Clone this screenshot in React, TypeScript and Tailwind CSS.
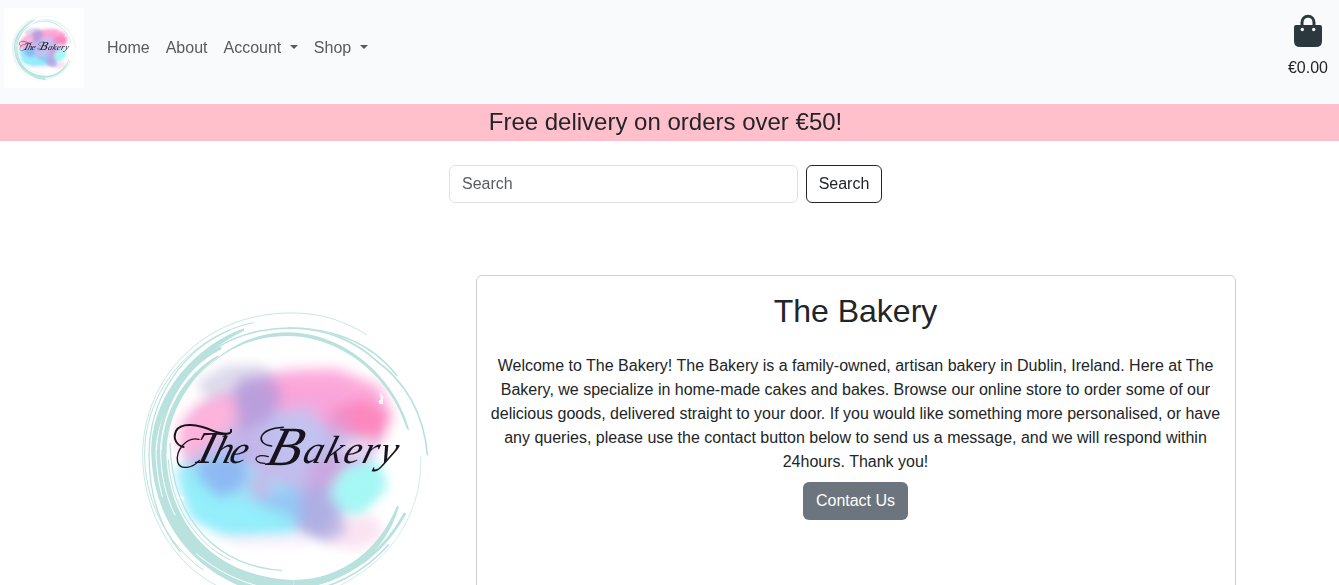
import React, { useId } from "react";

function BakeryLogo({ className }: { className: string }) {
  const id = useId().replace(/[^a-zA-Z0-9]/g, "");
  const soft = `soft${id}`;
  const wide = `wide${id}`;
  const url = (n: string) => `url(#${n})`;
  return (
    <svg viewBox="0 0 360 360" className={className} role="img">
      <defs>
        <filter id={soft} x="-20%" y="-20%" width="140%" height="140%">
          <feGaussianBlur stdDeviation="19" />
        </filter>
        <filter id={wide} x="-30%" y="-30%" width="160%" height="160%">
          <feGaussianBlur stdDeviation="17" />
        </filter>
      </defs>
      <rect width="360" height="360" fill="#fff" />
      <g transform="translate(24 25) scale(0.33333)">
        {/* watercolour wash */}
        <g filter={url(wide)}>
          <path d="M200 245 L290 195 L390 195 L480 260 L400 380 L250 330Z" fill="#dedbec" />
          <path d="M190 350 L330 260 L620 260 L740 330 L740 440 L660 600 L480 690 L260 600 L160 520Z" fill="#c2beed" />
          <path d="M140 500 L300 470 L520 600 L520 685 L300 695 L200 650Z" fill="#9ae4f8" />
          <path d="M600 530 L740 490 L760 560 L690 640 L580 640Z" fill="#aef3f4" />
          <path d="M560 650 L740 650 L760 710 L680 750 L590 735Z" fill="#fbe3f2" />
          <path d="M500 590 L620 560 L650 700 L590 725 L500 690Z" fill="#c5bde8" />
          <path d="M250 700 L520 700 L540 735 L320 735Z" fill="#f7effb" />
        </g>
        <g filter={url(soft)}>
          <path d="M400 230 L480 210 L620 207 L750 260 L785 345 L750 430 L660 400 L560 360 L460 340 L400 290Z" fill="#fca3d8" opacity=".95" />
          <path d="M600 330 L700 295 L785 345 L750 420 L640 395Z" fill="#fb83b8" opacity=".85" />
          <path d="M150 370 L205 310 L300 275 L350 330 L290 395 L180 480 L145 440Z" fill="#fdb2db" />
          <path d="M330 235 L420 225 L460 290 L415 360 L330 400 L310 300Z" fill="#b897da" opacity=".8" />
          <path d="M460 330 L540 310 L590 400 L540 480 L440 440Z" fill="#c2c4f2" opacity=".7" />
          <path d="M580 350 L650 325 L660 380 L600 420Z" fill="#df98d2" opacity=".6" />
          <path d="M640 425 L740 415 L720 465 L640 485Z" fill="#f6dcf0" opacity=".9" />
          <path d="M300 400 L390 400 L410 470 L300 490Z" fill="#c4b0e7" opacity=".7" />
          <path d="M210 480 L340 460 L350 550 L270 595 L200 570Z" fill="#8db3f2" opacity=".9" />
          <path d="M380 590 L500 560 L550 640 L480 680 L370 650Z" fill="#94c4f3" opacity=".9" />
          <path d="M350 540 L420 490 L430 590 L370 600Z" fill="#cfaee4" opacity=".7" />
          <path d="M540 480 L660 460 L610 560 L530 570Z" fill="#cda0dc" opacity=".8" />
          <path d="M140 510 L210 540 L270 595 L390 615 L480 650 L490 695 L270 700 L180 650Z" fill="#92effb" opacity=".95" />
          <path d="M640 515 L740 490 L770 560 L690 635 L595 600Z" fill="#a4f8f5" opacity=".95" />
          <path d="M510 570 L590 550 L620 640 L580 710 L510 680Z" fill="#aaa9e2" opacity=".75" />
        </g>
        <path d="M745 304 L753 298 L749 274 L760 292 L758 313 L748 311Z" fill="#fff" opacity=".9" />
        <path d="M143 580 L151 589 L164 592 L157 603 L145 597Z" fill="#fff" />

        {/* brushed ring */}
        <g fill="#b9e2df">
          <path d="M342 85 C190 140 62 290 64 460 L77 460 C80 310 205 155 342 93Z" />
          <path d="M264 166 C160 225 96 340 95 460 L109 460 C112 330 190 225 264 172Z" />
          <path d="M64 450 C64 640 175 860 490 900 L490 840 C230 830 108 645 109 450Z" />
          <path d="M490 840 C640 838 750 745 801 617 L807 620 C765 762 645 858 490 866Z" />
          <path d="M838 390 C795 235 650 100 475 97 C350 98 265 160 200 235 C270 155 360 108 475 108 C640 110 785 235 831 388Z" />
        </g>
        <g fill="none" stroke="#b9e2df" strokeLinecap="round">
          <path d="M710 104 C630 55 560 38 475 39 C220 42 38 235 38 465 C38 590 90 725 190 810 C255 864 350 905 455 907" strokeWidth="2.5" />
          <path d="M370 68 C190 105 45 265 44 460 C43 590 100 725 220 810" strokeWidth="3" />
          <path d="M300 90 C150 155 58 300 57 465 C57 580 90 680 150 755" strokeWidth="4" />
          <path d="M872 470 C878 620 800 750 690 820 C620 870 550 895 470 900" strokeWidth="2" />
          <path d="M85 460 C88 310 195 90 475 84 C640 84 740 150 800 226" strokeWidth="5" />
          <path d="M85 460 C88 340 150 205 270 145" strokeWidth="9" />
          <path d="M740 183 C825 245 882 340 892 464" strokeWidth="5" />
          <path d="M475 84 C580 82 675 122 740 183" strokeWidth="5" />
          <path d="M455 811 C280 800 127 680 120 430" strokeWidth="4" />
          <path d="M300 780 C190 725 122 610 115 480" strokeWidth="3" />
          <path d="M824 642 C765 750 675 820 558 852" strokeWidth="8" />
          <path d="M775 735 C700 820 600 868 500 880" strokeWidth="5" />
        </g>
        <g fill="none" stroke="#fff" strokeLinecap="round">
          <path d="M78 450 C78 500 86 550 97 590" strokeWidth="3" />
          <path d="M92 450 C92 530 108 590 135 645" strokeWidth="3" />
          <path d="M200 762 C280 830 380 868 490 876" strokeWidth="3" />
        </g>

        {/* wordmark */}
        <g fill="#17141f" fontFamily="'Liberation Serif', serif" fontStyle="italic">
          <g transform="translate(0 490) skewX(-16)">
            <text x="182" y="0" fontSize="138">T</text>
            <text x="242" y="0" fontSize="118" textLength="104" lengthAdjust="spacing">he</text>
            <text x="404" y="4" fontSize="166">B</text>
            <text x="514" y="0" fontSize="118" textLength="280" lengthAdjust="spacing">akery</text>
          </g>
        </g>
        <g fill="none" stroke="#17141f" strokeLinecap="round">
          <path d="M303 389 C307 406 280 404 250 393 C205 373 153 365 138 393 C127 418 142 437 161 441" strokeWidth="6" />
          <path d="M207 418 C169 408 136 453 143 486 C151 513 190 503 208 481" strokeWidth="4" />
          <path d="M425 438 C376 432 381 387 460 382" strokeWidth="4.5" />
          <path d="M415 470 C370 456 365 491 405 490" strokeWidth="4" />
        </g>
      </g>
    </svg>
  );
}

function Caret() {
  return (
    <span className="ml-[8.5px] inline-block h-0 w-0 border-x-[4.8px] border-t-[4.8px] border-x-transparent border-t-current align-[4px]" />
  );
}

function BagIcon() {
  return (
    <svg viewBox="0 0 32 34" className="h-[34px] w-8" fill="none">
      <path d="M10 13 V8.500 C10 4.800 12.500 2.300 16 2.300 S22 4.800 22 8.500 V13" stroke="#2b383e" strokeWidth="3" />
      <path d="M4 11 H28 Q30 11 30 13 V27 Q30 33 24 33 H8 Q2 33 2 27 V13 Q2 11 4 11Z" fill="#2b383e" />
      <circle cx="10.300" cy="15.500" r="1.700" fill="#f8fafc" />
      <circle cx="21.700" cy="15.500" r="1.700" fill="#f8fafc" />
    </svg>
  );
}

const links = [
  { label: "Home", menu: false },
  { label: "About", menu: false },
  { label: "Account", menu: true },
  { label: "Shop", menu: true },
];

export default function App() {
  return (
    <div className="h-[585px] overflow-hidden bg-white font-['Liberation_Sans',Arial,sans-serif] text-base leading-6 text-[#212529]">
      <nav className="flex h-[104px] items-start justify-between bg-[#f8fafc]">
        <div className="flex items-center pt-2 pl-1">
          <BakeryLogo className="size-20" />
          <ul className="ml-[15px] flex text-[#595a5b]">
            {links.map((l) => (
              <li key={l.label} className="px-2">
                <a href="#" className="whitespace-nowrap">
                  {l.label}
                  {l.menu && <Caret />}
                </a>
              </li>
            ))}
          </ul>
        </div>
        <a href="#" className="mr-[11px] flex flex-col items-center pt-[14px]">
          <BagIcon />
          <span className="mt-2">€0.00</span>
        </a>
      </nav>

      <div className="h-[37px] bg-[#ffc0cb] pr-2 text-center text-2xl leading-[36px]">
        Free delivery on orders over €50!
      </div>

      <form className="mt-6 ml-[449px] flex gap-2" onSubmit={(e) => e.preventDefault()}>
        <input
          type="text"
          placeholder="Search"
          className="h-[38px] w-[349px] rounded-md border border-[#dee2e6] px-3 placeholder:text-[#595c5f]"
        />
        <button className="h-[38px] w-[76px] rounded-md border border-[#212529]">Search</button>
      </form>

      <main className="mt-[72px] ml-[106px] flex gap-[10px]">
        <BakeryLogo className="size-[360px] shrink-0" />
        <section className="h-[400px] w-[760px] rounded-md border border-[#cfd0d1] pt-4 pr-[13px] pl-3 text-center">
          <h1 className="text-[32px] leading-[38px]">The Bakery</h1>
          <p className="mt-6">
            Welcome to The Bakery! The Bakery is a family-owned, artisan bakery in Dublin, Ireland. Here at The
            Bakery, we specialize in home-made cakes and bakes. Browse our online store to order some of our
            delicious goods, delivered straight to your door. If you would like something more personalised, or have
            any queries, please use the contact button below to send us a message, and we will respond within
            24hours. Thank you!
          </p>
          <button className="mt-2 h-[38px] w-[105px] rounded-md bg-[#6c757d] text-white">Contact Us</button>
        </section>
      </main>
    </div>
  );
}
